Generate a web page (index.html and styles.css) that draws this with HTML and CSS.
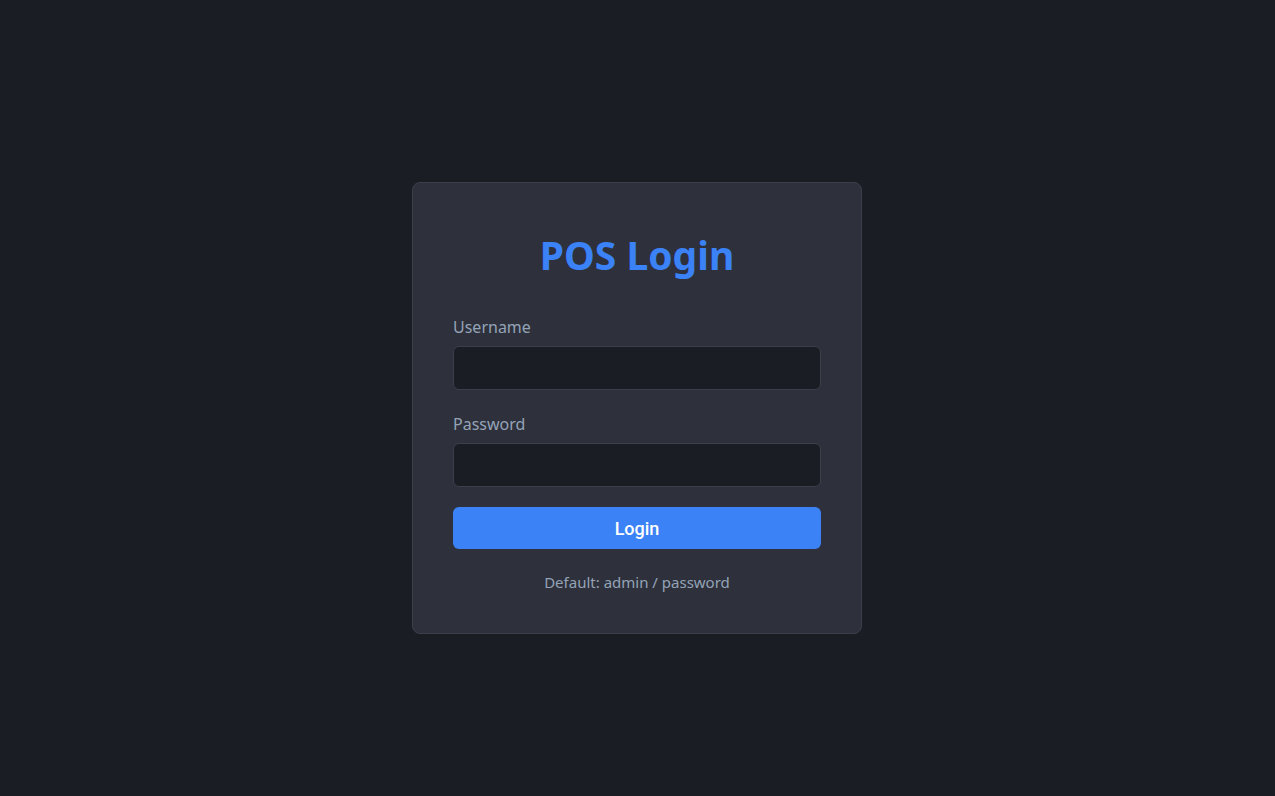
FILE: index.html
```html
<!DOCTYPE html>
<html lang="en">
<head>
<meta charset="utf-8">
<title>POS Login</title>
<link rel="stylesheet" href="styles.css">
</head>
<body>
<main class="card">
  <h1 class="title">POS Login</h1>
  <form class="form">
    <div class="field">
      <label class="label" for="username">Username</label>
      <input class="input" id="username" type="text">
    </div>
    <div class="field field-next">
      <label class="label" for="password">Password</label>
      <input class="input" id="password" type="password">
    </div>
    <button class="button" type="button">Login</button>
  </form>
  <p class="hint">Default: admin / password</p>
</main>
</body>
</html>
```
FILE: styles.css
```css
html, body {
  margin: 0;
  height: 100%;
}
body {
  background: #1b1d25;
  font-family: "Noto Sans", "Open Sans", sans-serif;
  display: flex;
  align-items: center;
  justify-content: center;
  padding-top: 20px;
  padding-right: 1px;
  box-sizing: border-box;
}
.card {
  width: 450px;
  box-sizing: border-box;
  padding: 40px;
  background: #2e313b;
  border: 1px solid #3b3f4a;
  border-radius: 8px;
}
.title {
  margin: 7px 0 0;
  font-size: 39px;
  line-height: 50px;
  font-weight: 700;
  color: #3b82f6;
  text-align: center;
}
.form {
  margin-top: 35px;
  display: flex;
  flex-direction: column;
}
.field {
  display: flex;
  flex-direction: column;
}
.field-next {
  margin-top: 22px;
}
.label {
  font-size: 16px;
  line-height: 24px;
  color: #94a3b8;
  margin-bottom: 7px;
}
.input {
  height: 44px;
  box-sizing: border-box;
  background: #1b1d25;
  border: 1px solid #3b3f4a;
  border-radius: 6px;
  color: #e5e7eb;
  padding: 0 12px;
  font-size: 16px;
  outline: none;
}
.button {
  margin-top: 20px;
  height: 42px;
  border: none;
  border-radius: 6px;
  background: #3b82f6;
  color: #ffffff;
  font-family: Roboto, "Liberation Sans", sans-serif;
  font-size: 18px;
  font-weight: 500;
}
.hint {
  margin: 23px 0 0;
  font-size: 15px;
  line-height: 21px;
  color: #94a3b8;
  text-align: center;
}
```
